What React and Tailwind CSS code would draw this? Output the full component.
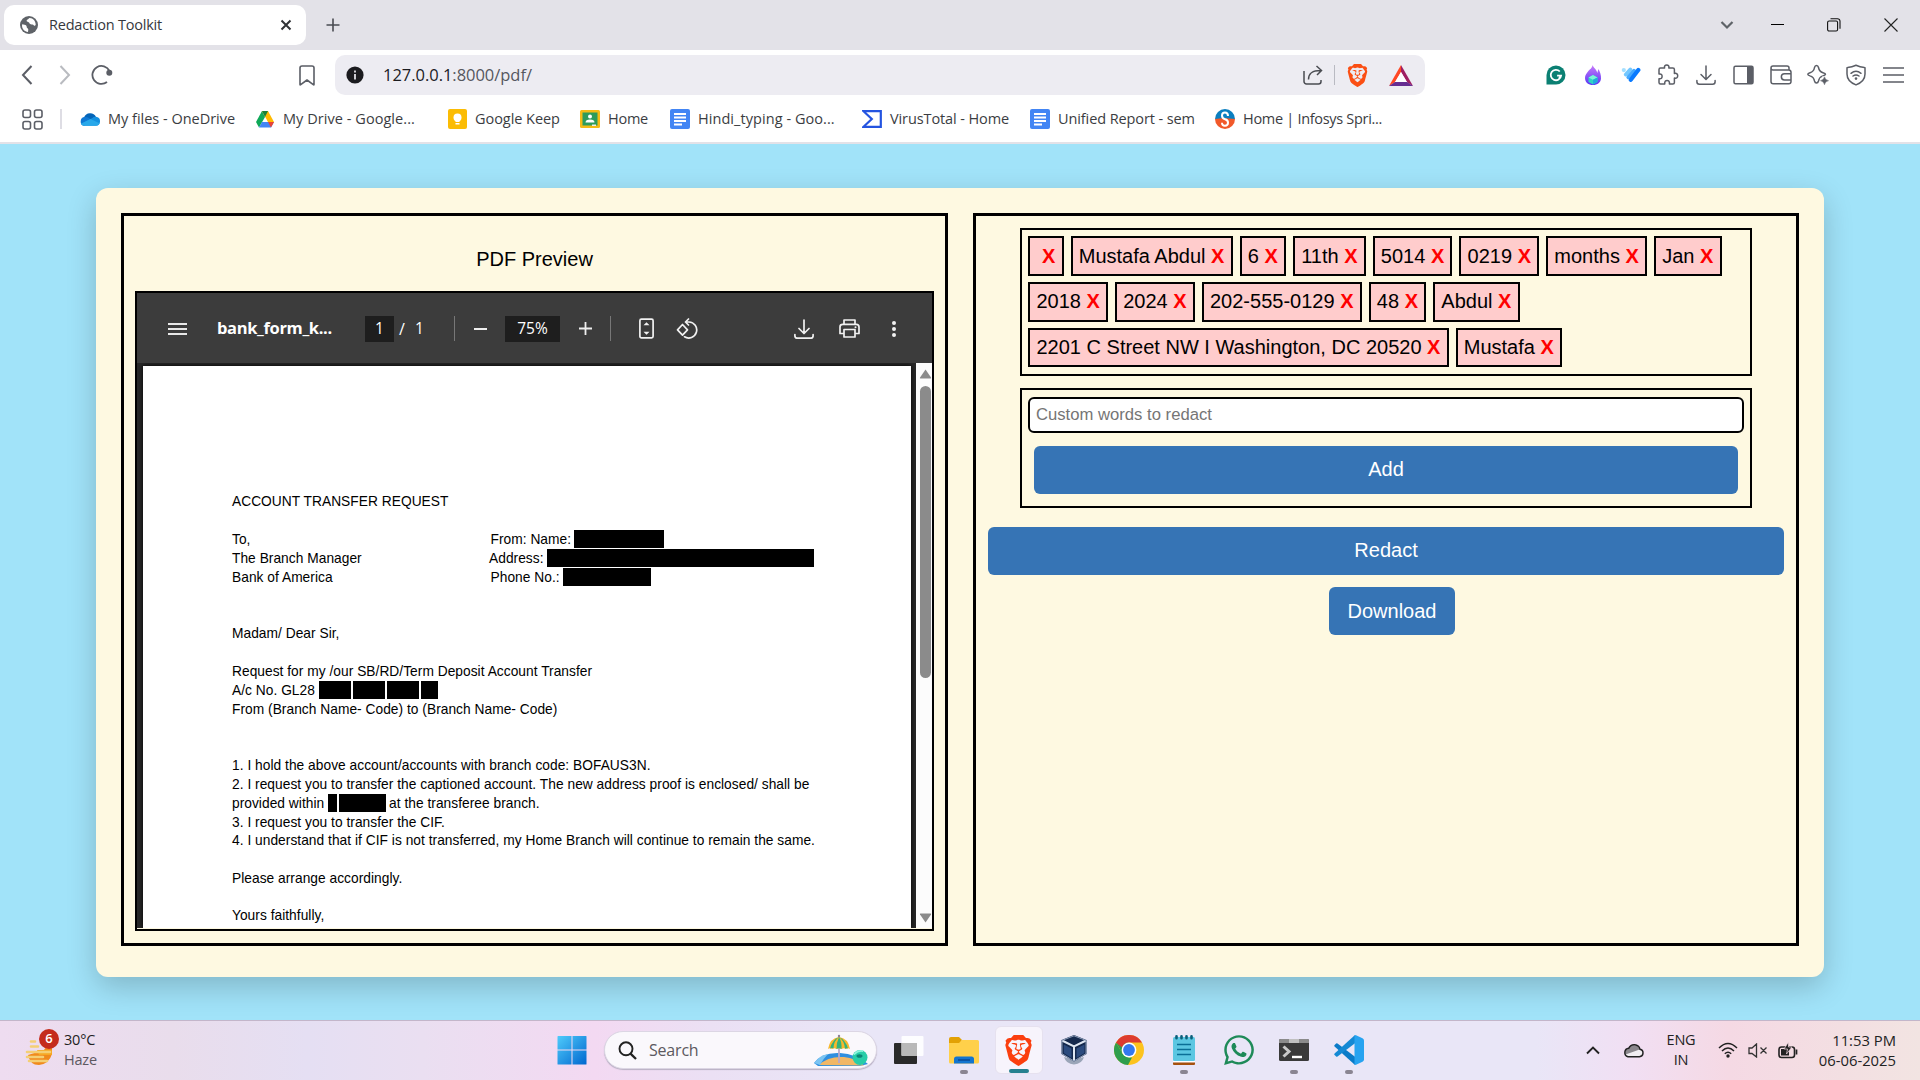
import React from "react";
import { SiBrave } from "react-icons/si";
import { FaWhatsapp } from "react-icons/fa";

const ui = "font-['Open_Sans','Noto_Sans',sans-serif]";

function Svg({ w, h, vb, className = "", children }) {
  return (
    <svg width={w} height={h} viewBox={vb || `0 0 ${w} ${h}`} fill="none" className={`shrink-0 ${className}`}>
      {children}
    </svg>
  );
}

/* ---------- Browser chrome ---------- */

function TabStrip() {
  return (
    <div className="flex h-[50px] items-center bg-[#e3e2e8] pl-1">
      <div className="flex h-10 w-[302px] items-center rounded-[10px] bg-white pl-4 pr-[14px]">
        <Svg w={18} h={18}>
          <circle cx="9" cy="9" r="9" fill="#5f6368" />
          <path d="M2.2 8.2c1.6.2 3.2.5 4 1.4.8.8.2 1.8 1 2.4.9.6 1.3 1.2 1 2.4l-.2 1.6C4.700 15.700 2 13 2 9.500zM9 2.200c-.5 1.200-2.400 1.200-2.400 2.600 0 1.500 2.200.8 2.600 2 .4 1.300 1.600 1.800 3 1.600 1.600-.2 1.600 1.600 2.600 1.400l.9-.8C15.700 5 13 2 9.800 2z" fill="#fff" />
        </Svg>
        <span className="ml-[11px] text-[14.500px] tracking-[-0.22px] text-[#36383d]">Redaction Toolkit</span>
        <Svg w={12} h={12} className="ml-auto">
          <path d="M1.500 1.500l9 9M10.500 1.500l-9 9" stroke="#303236" strokeWidth="2" />
        </Svg>
      </div>
      <Svg w={14} h={14} className="ml-5">
        <path d="M7 .500v13M.500 7h13" stroke="#4a4c52" strokeWidth="1.600" />
      </Svg>
      <div className="ml-auto flex items-center pr-[22px]">
        <Svg w={14} h={10} className="mr-[37px]">
          <path d="M1.500 2l5.500 5.500L12.500 2" stroke="#5f6368" strokeWidth="2.200" />
        </Svg>
        <Svg w={13} h={14} className="mr-[43px]">
          <path d="M0 6h13" stroke="#000" strokeWidth="1" transform="translate(0 .5)" />
        </Svg>
        <Svg w={14} h={14} className="mr-[43px]">
          <rect x=".6" y="3" width="10" height="10" rx="1.500" stroke="#111" strokeWidth="1.100" />
          <path d="M3.500.7h7a2.500 2.500 0 0 1 2.500 2.500v7.500" stroke="#111" strokeWidth="1.100" />
        </Svg>
        <Svg w={14} h={14}>
          <path d="M.5.500l13 13M13.500.500l-13 13" stroke="#222" strokeWidth="1.100" />
        </Svg>
      </div>
    </div>
  );
}

function ExtensionIcons() {
  const s = { stroke: "#5b5e66", strokeWidth: 1.5, strokeLinecap: "round", strokeLinejoin: "round" };
  const icons = [
    <Svg w={20} h={20}>
      <path d="M.5 19.500V10A9.500 9.500 0 1 1 10 19.500z" fill="#0b8073" />
      <path d="M13.800 6.500a5.200 5.200 0 1 0 1.300 4.200h-4M13 13.500l2-2.800" stroke="#fff" strokeWidth="1.800" />
    </Svg>,
    <Svg w={18} h={22}>
      <defs>
        <linearGradient id="flame" x1="0" y1="0" x2="0" y2="1">
          <stop offset="0" stopColor="#c77bfa" />
          <stop offset="1" stopColor="#5b35f5" />
        </linearGradient>
      </defs>
      <path d="M8.500 1c1 3 4.500 4.500 4.700 8l1.300-4c1.500 3 2.700 6 2.500 9.500C16.700 18.500 13.500 21 9 21s-8-2.500-8-7c0-3 1.500-4.500 3-6.500 1.500-2 4.500-3.500 4.500-6.500z" fill="url(#flame)" />
      <path d="M9 11l4.500 2.400v4.600L9 20.500 4.500 18v-4.600z" fill="#2fd5c4" />
      <path d="M9 11l4.500 2.400L9 15.700l-4.500-2.300z" fill="#7bf5d8" />
      <path d="M9 15.700l4.500-2.300V18L9 20.500z" fill="#21a9de" />
    </Svg>,
    <Svg w={20} h={16}>
      <path d="M2.800 3v.1" stroke="#a5dfff" strokeWidth="4.200" strokeLinecap="round" />
      <path d="M9.300 2.500L4.800 7.500" stroke="#74c8ff" strokeWidth="3.800" strokeLinecap="round" />
      <path d="M13 3.800L7.300 10.300" stroke="#45a9ff" strokeWidth="3.800" strokeLinecap="round" />
      <path d="M17.300 3L9.800 12.800" stroke="#0a7aff" strokeWidth="4.200" strokeLinecap="round" />
    </Svg>,
    <Svg w={22} h={22}>
      <path {...s} d="M2 5.500Q2 4 3.500 4H7.600C7 1.900 8.200 1 9.700 1s2.700.9 2.100 3h4.100q1.500 0 1.500 1.500v4c2.400-.6 3.300.8 3.300 2.300s-.9 2.900-3.300 2.300v4.400q0 1.500-1.500 1.500h-3.500c.5-2.700-.9-3.600-2.300-3.600s-2.800.9-2.300 3.600H3.500Q2 20 2 18.500V14.700c2.500.4 3.100-1 3.100-2.400S4.500 9.600 2 10z" />
    </Svg>,
    <Svg w={20} h={20}>
      <path {...s} d="M10 1v13M5 9.500l5 5 5-5M.900 15.500v1.200a2.500 2.500 0 0 0 2.500 2.500h13.200a2.500 2.500 0 0 0 2.500-2.500v-1.200" />
    </Svg>,
    <Svg w={21} h={20}>
      <rect x="1" y="1.200" width="19" height="17.600" rx="1.500" {...s} />
      <path d="M14 1h5q1 0 1 1v16q0 1-1 1h-5z" fill="#5b5e66" />
    </Svg>,
    <Svg w={22} h={20}>
      <path {...s} d="M1 3v13.500A2.300 2.300 0 0 0 3.300 18.800h15.400A2.300 2.300 0 0 0 21 16.500V7.300A2.300 2.300 0 0 0 18.700 5H3a2 2 0 0 1-2-2 2 2 0 0 1 2-2h14q2 0 2 2v2M21 8.700h-6.500a3 3 0 0 0 0 6.300H21" />
    </Svg>,
    <Svg w={22} h={22}>
      <path {...s} d="M9.500 1.500q1.500 0 2 2 .8 4.200 4.500 5.300 2.500.7 2.500 1.500t-2.500 1.600Q12.300 13 11.500 17q-.5 2-2 2t-2-2Q6.800 13 3 11.900.8 11.200.8 10.300T3 8.800Q6.800 7.700 7.500 3.500q.5-2 2-2z" />
      <path d="M17.500 12.500v8M13.500 16.500h8" stroke="#fff" strokeWidth="5" />
      <path d="M17.500 12.800q.5 3.200 4 3.900-3.500.6-4 4-.6-3.400-4-4 3.400-.7 4-3.900z" fill="#5b5e66" stroke="#5b5e66" strokeWidth=".5" />
    </Svg>,
    <Svg w={20} h={22}>
      <path {...s} d="M10 1.200c2.500 1.200 5 2 8.500 2.300q.5 0 .5.600V10c0 5-3.500 8.800-9 10.900C4.500 18.800 1 15 1 10V4.100q0-.6.500-.6C5 3.200 7.500 2.400 10 1.200z" />
      <path {...s} d="M5 9.300q5-4 10 0M7 12q3-2.200 6 0" />
      <circle cx="10" cy="14.600" r="1.300" fill="#5b5e66" />
    </Svg>,
    <Svg w={21} h={16}>
      <path d="M0 1h21M0 8h21M0 15h21" stroke="#5b5e66" strokeWidth="1.600" />
    </Svg>,
  ];
  return (
    <div className="ml-[112px] flex">
      {icons.map((icon, i) => (
        <div key={i} className="flex h-6 w-[37.500px] items-center justify-center">{icon}</div>
      ))}
    </div>
  );
}

function AddressRow() {
  return (
    <div className="flex h-[50px] items-center pl-[21px]">
      <Svg w={12} h={20}>
        <path d="M10.500 1L2 10l8.500 9" stroke="#5b5e66" strokeWidth="2" />
      </Svg>
      <Svg w={12} h={20} className="ml-[26px]">
        <path d="M1.500 1L10 10l-8.500 9" stroke="#b9bbc0" strokeWidth="2" />
      </Svg>
      <Svg w={22} h={22} className="ml-[20px]">
        <path d="M16 18A9 9 0 1 1 18.500 7" stroke="#5b5e66" strokeWidth="1.800" />
        <circle cx="18.300" cy="8.800" r="3" fill="#5b5e66" />
      </Svg>
      <Svg w={16} h={21} className="ml-[186px]">
        <path d="M1 19.500V3Q1 1 3 1h10q2 0 2 2v16.500q0 .8-.7.200L8 15l-6.300 4.700q-.7.600-.7-.2z" stroke="#5b5e66" strokeWidth="1.600" strokeLinejoin="round" />
      </Svg>
      <div className="ml-5 flex h-10 w-[1090px] items-center rounded-[10px] bg-[#edecf2] pl-[11px]">
        <Svg w={18} h={18}>
          <circle cx="9" cy="9" r="8.600" fill="#1b1b1f" />
          <path d="M9 8v5.500M9 4.500v2" stroke="#edecf2" strokeWidth="1.700" />
        </Svg>
        <span className="ml-[19px] text-[16.500px] tracking-[-0.030px] text-[#1b1b1f]">
          127.0.0.1<span className="text-[#55575e]">:8000/pdf/</span>
        </span>
        <div className="ml-auto flex items-center pr-[12px]">
          <Svg w={20} h={20}>
            <path d="M1 6v10.500A2.500 2.500 0 0 0 3.500 19h12a2.500 2.500 0 0 0 2.500-2.500V15M5.500 14.500C5.500 9 8 5.500 18 5.500M13.500 1L18.500 5.500 14 10" stroke="#4a4c52" strokeWidth="1.500" />
          </Svg>
          <div className="ml-[11px] h-5 w-px bg-[#b9bac2]" />
          <div className="ml-[12px] flex h-[23px] w-5 items-center justify-center">
            <SiBrave className="h-[23px] w-[23px] shrink-0 text-[#fb4f14]" />
          </div>
          <Svg w={24} h={21} className="ml-[22px]">
            <path d="M12 0L0 21l6-3.800L12 7z" fill="#ff4724" />
            <path d="M12 0l12 21-6-3.800L12 7z" fill="#9e1f63" />
            <path d="M0 21h24l-6-4H6z" fill="#662d91" />
            <path d="M12 7l6 10H6z" fill="#fff" />
          </Svg>
        </div>
      </div>
      <ExtensionIcons />
    </div>
  );
}

function DocsIcon() {
  return (
    <Svg w={20} h={20}>
      <rect width="20" height="20" rx="2" fill="#4285f4" />
      <path d="M4 5h12M4 8.500h12M4 12h12M4 15.500h8" stroke="#fff" strokeWidth="1.800" />
    </Svg>
  );
}

const bookmarks = [
  {
    label: "My files - OneDrive", width: "w-[175px]", tracking: "tracking-[-0.010px]",
    icon: (
      <Svg w={20} h={14}>
        <path d="M4 5.500A6.500 6.500 0 0 1 16 5l-5 4-9-3z" fill="#0364b8" />
        <path d="M4.500 5Q8 4.500 10 6.800l3.500 2.700L4 13.800A4.500 4.500 0 0 1 4.500 5z" fill="#0f78d4" />
        <path d="M16 4.800a4.500 4.500 0 0 1 4 4.700 4.300 4.300 0 0 1-4 4.300H4.500q-2.500 0-3.600-2L12 6.200Q13.500 4.800 16 4.800z" fill="#1490df" />
        <path d="M10.500 7l9 4.300a4.200 4.200 0 0 1-3.500 2.500H4.500Q2 13.800.9 11.800z" fill="#28a8ea" />
      </Svg>
    ),
  },
  {
    label: "My Drive - Google...", width: "w-[192px]", tracking: "tracking-[0.050px]",
    icon: (
      <Svg w={18} h={17}>
        <path d="M6 0L0 11l3 5.500L9 6z" fill="#0fa958" />
        <path d="M6 0h6l6 11h-6z" fill="#ffba00" />
        <path d="M3 16.500L6 11h12l-3 5.500z" fill="#4285f4" />
        <path d="M12 11h6l-3 5.500z" fill="#ea4335" />
        <path d="M6 0h6L9 6z" fill="#188038" />
      </Svg>
    ),
  },
  {
    label: "Google Keep", width: "w-[133px]", tracking: "tracking-[-0.050px]",
    icon: (
      <Svg w={19} h={20}>
        <rect width="19" height="20" rx="2" fill="#fbbc04" />
        <circle cx="9.500" cy="8.500" r="4" fill="#fff" />
        <path d="M7.500 11h4v2h-4zM7.500 14h4v1.500h-4z" fill="#fff" />
      </Svg>
    ),
  },
  {
    label: "Home", width: "w-[90px]", tracking: "tracking-[-0.250px]",
    icon: (
      <Svg w={20} h={18}>
        <rect width="20" height="18" rx="1.500" fill="#f5ba15" />
        <rect x="2.500" y="2.500" width="15" height="13" fill="#2e9b5b" />
        <circle cx="10" cy="6.500" r="2" fill="#fff" />
        <path d="M5.500 12.500q0-3 4.500-3t4.500 3z" fill="#fff" />
        <path d="M12 14.500h4v1.500h-4z" fill="#eee" />
      </Svg>
    ),
  },
  { label: "Hindi_typing - Goo...", width: "w-[192px]", tracking: "tracking-[0.060px]", icon: <DocsIcon /> },
  {
    label: "VirusTotal - Home", width: "w-[168px]", tracking: "tracking-[-0.100px]",
    icon: (
      <Svg w={20} h={18}>
        <path d="M1.500 1.200H18.800v15.600H1.500L9.800 9z" stroke="#2454e0" strokeWidth="2.200" />
      </Svg>
    ),
  },
  { label: "Unified Report - sem", width: "w-[185px]", tracking: "tracking-[-0.100px]", icon: <DocsIcon /> },
  {
    label: "Home | Infosys Spri...", width: "w-[185px]", tracking: "tracking-[-0.300px]",
    icon: (
      <Svg w={20} h={20}>
        <path d="M0 10a10 10 0 0 1 20 0l-9 2z" fill="#0b7fc0" />
        <path d="M0 10l9-1 11 1a10 10 0 0 1-20 0z" fill="#f1592a" />
        <path d="M13 7Q13 3.500 10 3.500T7 6.500t3 3.700 3 3.500-3 3-3-3" stroke="#fff" strokeWidth="2" />
      </Svg>
    ),
  },
];

function BookmarksBar() {
  return (
    <div className="flex h-[44px] items-start border-b-2 border-[#e3e2e8]">
      <div className="flex h-[38px] items-center pl-[22px]">
        <Svg w={21} h={21}>
          {[1, 12.5].map((x) => [1, 12.5].map((y) => (
            <rect key={`${x}-${y}`} x={x} y={y} width="7.500" height="7.500" rx="2" stroke="#5b5e66" strokeWidth="1.600" />
          )))}
        </Svg>
        <div className="ml-[17px] mr-[18px] h-5 w-0.5 bg-[#dedde4]" />
        {bookmarks.map((b, i) => (
          <div key={i} className={`flex items-center whitespace-nowrap ${b.width}`}>
            <div className="flex w-5 justify-center">{b.icon}</div>
            <span className={`ml-2 text-[14.500px] text-[#3b3d42] ${b.tracking}`}>{b.label}</span>
          </div>
        ))}
      </div>
    </div>
  );
}

/* ---------- PDF viewer ---------- */

function PdfToolbar() {
  const s = { stroke: "#f1f1f1", strokeWidth: 1.7, strokeLinecap: "round", strokeLinejoin: "round" };
  return (
    <div className={`flex h-[70px] items-center bg-[#3c3c3c] pl-[31px] pt-px text-white ${ui}`}>
      <Svg w={19} h={12}>
        <path d="M0 1h19M0 6h19M0 11h19" stroke="#e8e8e8" strokeWidth="1.800" />
      </Svg>
      <span className="ml-[30px] w-[148px] text-[16.500px] font-bold tracking-[-0.350px]">bank_form_k...</span>
      <span className="flex h-[26px] w-[29px] items-center justify-center bg-[#1e1e1e] text-[15.500px]">1</span>
      <span className="ml-[5px] w-[16px] text-[16px]">/</span>
      <span className="w-[39px] text-[15.500px]">1</span>
      <div className="h-[25px] w-px bg-[#777]" />
      <Svg w={13} h={2} className="ml-[19px]"><path d="M0 1h13" stroke="#eee" strokeWidth="2" /></Svg>
      <span className="ml-[18px] flex h-[26px] w-[55px] items-center justify-center bg-[#1e1e1e] text-[15.500px]">75%</span>
      <Svg w={13} h={13} className="ml-[19px]"><path d="M0 6.500h13M6.500 0v13" stroke="#eee" strokeWidth="1.800" /></Svg>
      <div className="ml-[18px] h-[25px] w-px bg-[#777]" />
      <Svg w={15} h={21} className="ml-[28px]">
        <rect x=".9" y="1.200" width="13.200" height="18.600" rx="1.500" {...s} />
        <path d="M7.500 4.200l3 3h-6zM7.500 16.800l3-3h-6z" fill="#f1f1f1" />
      </Svg>
      <Svg w={22} h={21} className="ml-[22px]">
        <path d="M6.500 6.500l5 5.300-5 5.300-5-5.300z" {...s} />
        <path d="M9.500 4H13a8 8 0 1 1-4.500 14.800M12.500 1L9.500 4l3 3" {...s} />
      </Svg>
      <Svg w={20} h={20} className="ml-[96px]">
        <path {...s} d="M10 1v13M5 9.500l5 5 5-5M.900 15.500v1.200a2.500 2.500 0 0 0 2.500 2.500h13.200a2.500 2.500 0 0 0 2.500-2.500v-1.200" />
      </Svg>
      <Svg w={21} h={19} className="ml-[25px]">
        <path {...s} d="M5 5V1h11v4M5 14.500H1V8q0-2.700 2.700-2.700h13.600Q20 5.300 20 8v6.500h-4M5 10.500h11V18H5z" />
        <circle cx="16.500" cy="8.200" r="1" fill="#f1f1f1" />
      </Svg>
      <Svg w={4} h={16} className="ml-[32px]">
        <circle cx="2" cy="2" r="2" fill="#f1f1f1" /><circle cx="2" cy="8" r="2" fill="#f1f1f1" /><circle cx="2" cy="14" r="2" fill="#f1f1f1" />
      </Svg>
    </div>
  );
}

const Bar = ({ className }) => <span className={`h-[17.500px] shrink-0 -translate-y-px bg-black ${className}`} />;
const Row = ({ children, className = "" }) => (
  <div className={`flex h-[18.900px] items-center whitespace-pre ${className}`}>{children}</div>
);

function PdfPage() {
  return (
    <div className="ml-[6px] mt-[3px] h-[562px] w-[768px] shrink-0 overflow-hidden bg-white pl-[89px] pt-[127px] text-[13.750px] leading-[18.900px] tracking-[0.030px] text-black shadow-[0_0_5px_#000]">
      <Row>ACCOUNT TRANSFER REQUEST</Row>
      <Row className="mt-[18.900px]">
        <span className="w-[258.500px]">To,</span><span className="w-[83.500px]">From: Name: </span><Bar className="w-[90px]" />
      </Row>
      <Row>
        <span className="w-[257px]">The Branch Manager</span><span className="w-[57.500px]">Address: </span><Bar className="w-[267.500px]" />
      </Row>
      <Row>
        <span className="w-[258.500px]">Bank of America</span><span className="w-[72.500px]">Phone No.: </span><Bar className="w-[87.500px]" />
      </Row>
      <Row className="mt-[37.500px]">Madam/ Dear Sir,</Row>
      <Row className="mt-[18.900px]">Request for my /our SB/RD/Term Deposit Account Transfer</Row>
      <Row>
        <span className="w-[86.500px]">A/c No. GL28</span>
        <div className="flex gap-[2.250px]">
          <Bar className="w-[32px]" /><Bar className="w-[32px]" /><Bar className="w-[32px]" /><Bar className="w-[17px]" />
        </div>
      </Row>
      <Row>From (Branch Name- Code) to (Branch Name- Code)</Row>
      <Row className="mt-[37.500px]">1. I hold the above account/accounts with branch code: BOFAUS3N.</Row>
      <Row>2. I request you to transfer the captioned account. The new address proof is enclosed/ shall be</Row>
      <Row>
        <span className="w-[96px]">provided within</span>
        <Bar className="w-[8.500px]" /><Bar className="ml-[2.500px] w-[47px]" /><span className="ml-[3px]">at the transferee branch.</span>
      </Row>
      <Row>3. I request you to transfer the CIF.</Row>
      <Row>4. I understand that if CIF is not transferred, my Home Branch will continue to remain the same.</Row>
      <Row className="mt-[18.500px]">Please arrange accordingly.</Row>
      <Row className="mt-[18.500px]">Yours faithfully,</Row>
    </div>
  );
}

function PreviewPanel() {
  return (
    <section className="h-[733px] w-[827px] border-[3px] border-black px-[11px]">
      <h1 className="flex h-[75px] items-center justify-center pt-[11px] text-[20px] leading-[23px] text-black">PDF Preview</h1>
      <div className="h-[640px] w-[799px] border-2 border-black">
        <PdfToolbar />
        <div className="flex h-[565px] justify-between overflow-hidden bg-[#282828]">
          <PdfPage />
          <div className="flex w-4 flex-col items-center bg-[#fcfcfc] pl-[2px] pt-[6px]">
            <Svg w={13} h={10}><path d="M6.500.500L12 8.500q.5 1-.5 1h-10q-1 0-.5-1z" fill="#8b8b8b" /></Svg>
            <div className="mt-[7px] h-[292px] w-[11px] rounded-full bg-[#8b8b8b]" />
            <Svg w={13} h={10} className="mt-auto mb-[5px]"><path d="M6.500 9.500L12 1.500q.5-1-.5-1h-10q-1 0-.5 1z" fill="#8b8b8b" /></Svg>
          </div>
        </div>
      </div>
    </section>
  );
}

/* ---------- Redaction controls ---------- */

const words = [
  "", "Mustafa Abdul", "6", "11th", "5014", "0219", "months", "Jan",
  "2018", "2024", "202-555-0129", "48", "Abdul",
  "2201 C Street NW I Washington, DC 20520", "Mustafa",
];

function RedactPanel() {
  return (
    <section className="flex h-[733px] w-[826px] flex-col border-[3px] border-black px-3 pt-3 text-[20px] leading-[23px]">
      <div className="mx-auto flex h-[148px] w-[732px] flex-wrap content-start gap-x-[6.850px] gap-y-[6.250px] border-2 border-black p-[6.250px] text-black">
        {words.map((w, i) => (
          <span key={i} className="whitespace-pre border-2 border-black bg-[#ffcccc] p-[6.250px]">
            {w} <b className="text-[#ff0000]">X</b>
          </span>
        ))}
      </div>
      <div className="mx-auto mt-3 flex h-[120px] w-[732px] flex-col border-2 border-black px-[6px] pt-[7px]">
        <input
          placeholder="Custom words to redact"
          className="h-9 w-full rounded-[6px] border-2 border-black bg-white px-[6px] text-[16.670px] leading-5 placeholder:text-[#757575]"
        />
        <button className="mx-[6px] mt-[13px] h-12 rounded-[6px] bg-[#3674b5] pb-[2px] text-white">Add</button>
      </div>
      <button className="mt-[19px] h-12 rounded-[6px] bg-[#3674b5] pb-[2px] text-white">Redact</button>
      <button className="ml-[341px] mt-3 h-12 w-[126px] rounded-[6px] bg-[#3674b5] text-white">Download</button>
    </section>
  );
}

/* ---------- Taskbar ---------- */

function BeachIcon() {
  return (
    <Svg w={56} h={32}>
      <path d="M0 29Q8 18 26 19q16 1 28 11l-8 2H4z" fill="#2f8fe0" />
      <path d="M5 31Q14 22 30 23q12 1 20 8.500z" fill="#f1b765" />
      <path d="M0 29q6-8 14-9-5 5-8 11z" fill="#7ac4f2" />
      <path d="M25 3v26" stroke="#b9a7c9" strokeWidth="1.800" />
      <path d="M14 15Q16 4 25 3q9 1 11 12-2-1.500-4 0-2-1.500-4.500 0-2.500-1.500-5 0-2.500-1.500-4.500 0-2-1.500-4 0z" fill="#f8b82c" />
      <path d="M25 3q-5.500 4-5.500 11.500-2-1-3.500.3Q18 6 25 3zM25 3q-2.500 5-2.500 12 2.500-1.300 5 0Q28 8 25 3zM25 3q6.500 3 9 11.500-1.500-.8-3 .3Q30.500 7 25 3z" fill="#35b37a" />
      <circle cx="25" cy="2" r="1.200" fill="#8d8198" />
      <circle cx="46" cy="23.500" r="7.500" fill="#27cda8" />
      <ellipse cx="45.500" cy="22" rx="3" ry="1.800" fill="#0c8576" />
      <path d="M40.500 20q3-3.500 8-3" stroke="#8ff3dc" strokeWidth="1.800" strokeLinecap="round" />
    </Svg>
  );
}

const apps = [
  {
    icon: (
      <Svg w={30} h={30}>
        <rect x="0" y="8" width="23" height="21" rx="1" fill="#2a2a2a" />
        <rect x="7.500" y="1" width="22" height="20" rx="1" fill="#fff" fillOpacity=".9" />
        <path d="M7.500 8H23v13H8.500q-1 0-1-1z" fill="#b9b9b9" />
      </Svg>
    ),
  },
  {
    mark: "w-2 bg-[#8a8592]",
    icon: (
      <Svg w={30} h={28}>
        <path d="M0 3q0-2 2-2h8l3 3-2 3H0z" fill="#e2a105" />
        <path d="M0 7h10l3-3h15.500q1.500 0 1.500 1.500V26q0 1.500-1.500 1.500h-27Q0 27.500 0 26z" fill="#ffd04a" />
        <path d="M5 27.500V23q0-2.500 2.500-2.500h15q2.500 0 2.500 2.500v4.500z" fill="#1375cf" />
        <path d="M9 24h12" stroke="#0a4a94" strokeWidth="1.500" />
      </Svg>
    ),
  },
  { active: true, mark: "w-5 bg-[#26808f]", icon: <SiBrave className="h-[31px] w-[31px] -translate-x-px text-[#fb3f0f]" /> },
  {
    icon: (
      <Svg w={26} h={30}>
        <path d="M3 22q2 7 10 7.500Q21 29 23 22l-10 3z" fill="#9aa5b8" />
        <path d="M13 0l12.500 5v14L13 26.500.5 19V5z" fill="#15294d" />
        <path d="M1 5.500l12 6 12-6M13 11.500V26" stroke="#dfe7f2" strokeWidth="2" />
        <path d="M13 .800L25 5.500v13.200L13 26 1 18.700V5.500z" stroke="#8d9db8" strokeWidth="1" />
        <path d="M15.500 13.500l8-4v8.500l-8 5zM2.800 9.500l7.700 4V23l-7.700-5z" fill="#2c4b7e" />
      </Svg>
    ),
  },
  {
    icon: (
      <Svg w={30} h={30}>
        <circle cx="15" cy="15" r="15" fill="#fcc31e" />
        <path d="M2 7.500L8.500 18.700 15 22.500h3l-4 7.500A15 15 0 0 1 2 7.500z" fill="#2e9e4d" />
        <path d="M2 7.500L8.500 18.700 15 7.500z" fill="#2e9e4d" />
        <path d="M2 7.500A15 15 0 0 1 28 7.500H15q-5 0-7 5z" fill="#dd3b2f" />
        <circle cx="15" cy="15" r="7.400" fill="#fff" />
        <circle cx="15" cy="15" r="5.900" fill="#3478ee" />
      </Svg>
    ),
  },
  {
    mark: "w-2 bg-[#8a8592]",
    icon: (
      <Svg w={22} h={30}>
        <rect x="0" y="2" width="22" height="24" rx="1.500" fill="#5cc7e2" />
        <path d="M0 26h22v1.500H0z" fill="#fff" /><path d="M0 27.500h22V29q0 1-1 1H1q-1 0-1-1z" fill="#a5510e" />
        <path d="M3.500 1.300v2M8.500 1.300v2M13.500 1.300v2M18.500 1.300v2" stroke="#0b5f7a" strokeWidth="2.600" strokeLinecap="round" />
        <path d="M4 9.500h14M4 14.500h14M4 19.500h14" stroke="#0b6f96" strokeWidth="1.700" />
      </Svg>
    ),
  },
  { icon: <FaWhatsapp className="h-[34px] w-[34px] text-[#1e8a58]" /> },
  {
    mark: "w-2 bg-[#8a8592]",
    icon: (
      <Svg w={30} h={22}>
        <rect width="30" height="22" rx="1.500" fill="#3a3a3a" />
        <path d="M0 4V1.500Q0 0 1.500 0h27Q30 0 30 1.500V4z" fill="#8b8b8b" />
        <path d="M10 0h10v4H10z" fill="#c0c0c0" />
        <path d="M4.500 7.500l5.500 5-5.500 5" stroke="#c9c9c9" strokeWidth="3" />
        <path d="M13 18h10" stroke="#fff" strokeWidth="2.400" />
      </Svg>
    ),
  },
  {
    mark: "w-2 bg-[#8a8592]",
    icon: (
      <Svg w={30} h={30}>
        <path d="M22 22.500L3.500 8.500q-.7-.5-1.400 0L.6 9.900q-.8.800 0 1.600L21 30z" fill="#0a7bc8" />
        <path d="M22 7.500L3.500 21.500q-.7.500-1.400 0L.6 20.100q-.8-.8 0-1.600L21 0z" fill="#1489d4" />
        <path d="M21.500 0L28.500 3.300q1.500.8 1.500 2.200v19q0 1.400-1.500 2.200L21.500 30q-.8-.3-1-1V1q.2-.7 1-1z" fill="#27a3f0" />
      </Svg>
    ),
  },
];

function Taskbar() {
  return (
    <footer className="flex h-[60px] items-center border-t border-[#c3b6ca] bg-[linear-gradient(90deg,#eedcf0_0%,#e9ddec_9%,#e5dff3_16%,#eadff1_22%,#f3d9f2_31%,#ebe0f4_37%,#e9e6f7_45%,#e9e6f7_80%,#f1dff3_85%,#f5d9e4_90%,#f3dfe2_96%,#f2e4e2_100%)] pb-px text-[#222]">
      <div className="flex h-full w-[557px] items-center pl-[25px]">
        <div className="relative h-[30px] w-[29px]">
          <Svg w={29} h={32}>
            <path d="M3 20Q5 30 14 30q10-1 13-11V11q-6 0-8 4z" fill="#f08a1c" />
            <path d="M12 15h15v5H14z" fill="#f6a723" />
            <path d="M6 6.500h4M6 11.500h7M2 17h23M2 22h16M4 26h18" stroke="#f4cf74" strokeWidth="2.600" strokeLinecap="round" />
          </Svg>
          <span className="absolute -top-[6px] left-[14px] flex h-5 w-5 items-center justify-center rounded-full bg-[#c42b1c] text-[13px] font-semibold text-white">6</span>
        </div>
        <div className="ml-[10px] text-[14.500px] leading-[20.500px] tracking-[-0.200px]">
          <div>30°C</div>
          <div className="text-[#5d5861]">Haze</div>
        </div>
      </div>
      <Svg w={30} h={30}>
        <defs>
          <linearGradient id="win" x1="0" y1="0" x2="1" y2="1">
            <stop offset="0" stopColor="#4fcbfb" /><stop offset="1" stopColor="#0067cf" />
          </linearGradient>
        </defs>
        <path d="M1 1h13.500v13.500H.500V1.500zM15.500 1H29q.5 0 .5.500v13h-14zM.500 15.500h14v14H1q-.5 0-.5-.5zM15.500 15.500h14V29q0 .5-.5.500H15.500z" fill="url(#win)" />
      </Svg>
      <div className="ml-[17px] flex h-[38px] w-[273px] items-center rounded-full border border-[#dcd6e4] bg-[#faf8fc] pl-[13px] pr-[6px] shadow-[0_1px_1px_#b9b1c4]">
        <Svg w={19} h={19}>
          <circle cx="8" cy="7.800" r="6.500" stroke="#222" strokeWidth="1.900" /><path d="M12.500 12.700L18 18" stroke="#222" strokeWidth="2.300" />
        </Svg>
        <span className="ml-3 text-[16px] tracking-[-0.200px] text-[#5c5960]">Search</span>
        <div className="ml-auto"><BeachIcon /></div>
      </div>
      <div className="ml-[4.500px] flex">
        {apps.map((a, i) => (
          <div key={i} className="flex w-[55px] justify-center">
            <div className={`relative flex h-12 w-12 items-center justify-center ${a.active ? "rounded-[6px] border border-[#e6e1ef] bg-[#f7f4fc]" : ""}`}>
              {a.icon}
              {a.mark && <span className={`absolute bottom-0 left-1/2 h-1 -translate-x-1/2 rounded-full ${a.mark}`} />}
            </div>
          </div>
        ))}
      </div>
      <div className="ml-auto flex items-center pr-6">
        <Svg w={14} h={9}><path d="M1 7.500l6-6 6 6" stroke="#222" strokeWidth="1.900" /></Svg>
        <Svg w={21} h={15} className="ml-[23px]">
          <path d="M5 13.800h11.500a3.800 3.800 0 0 0 .5-7.500A6 6 0 0 0 5.800 5.200 4.400 4.400 0 0 0 5 13.800z" fill="#f1eef2" />
          <path d="M5.500 5.500a6 6 0 0 1 11 1L11 8.500 2.500 11.500Q1 7 5.500 5.500z" fill="#8b888d" />
          <path d="M5 13.800h11.500a3.800 3.800 0 0 0 .5-7.500A6 6 0 0 0 5.800 5.200 4.400 4.400 0 0 0 5 13.800z" stroke="#222" strokeWidth="1.500" />
        </Svg>
        <div className="ml-[22px] w-[30px] text-center text-[14.500px] leading-[20px] tracking-[-0.200px]">ENG<br />IN</div>
        <Svg w={20} h={16} className="ml-[22px]">
          <path d="M1 6Q10-3 19 6M4 9q6-6 12 0M6.800 11.800q3.200-3 6.400 0" stroke="#222" strokeWidth="1.500" /><circle cx="10" cy="14" r="1.700" fill="#222" />
        </Svg>
        <Svg w={20} h={15} className="ml-[10px]">
          <path d="M1 5h3l4.500-4v13L4 10.500H1zM12.500 4.500l6 6M18.500 4.500l-6 6" stroke="#333" strokeWidth="1.300" />
        </Svg>
        <Svg w={20} h={17} className="ml-[10px]">
          <rect x="1" y="5" width="15.500" height="10.500" rx="2.500" stroke="#222" strokeWidth="1.600" />
          <rect x="3" y="7" width="8" height="6.500" fill="#222" /><path d="M18.500 7.500v5" stroke="#222" strokeWidth="1.700" />
          <path d="M10.500 0L6 7h3.500L8.500 12 14 5h-3.500z" fill="#222" stroke="#f5dbe5" strokeWidth=".7" />
        </Svg>
        <div className="ml-[18px] w-[80px] whitespace-nowrap text-right text-[14.800px] leading-[20.500px]">11:53 PM<br />06-06-2025</div>
      </div>
    </footer>
  );
}

export default function App() {
  return (
    <div className={`flex h-[1080px] w-[1920px] flex-col overflow-hidden bg-white ${ui}`}>
      <TabStrip />
      <AddressRow />
      <BookmarksBar />
      <main className="flex h-[876px] justify-center bg-[#a1e3f9] pt-11 font-['Liberation_Sans',Arial,sans-serif]">
        <div className="flex h-[789px] w-[1728px] gap-[25px] rounded-xl bg-[#fef9e1] p-[25px] shadow-[0_10px_30px_rgba(0,0,0,0.2)]">
          <PreviewPanel />
          <RedactPanel />
        </div>
      </main>
      <Taskbar />
    </div>
  );
}
